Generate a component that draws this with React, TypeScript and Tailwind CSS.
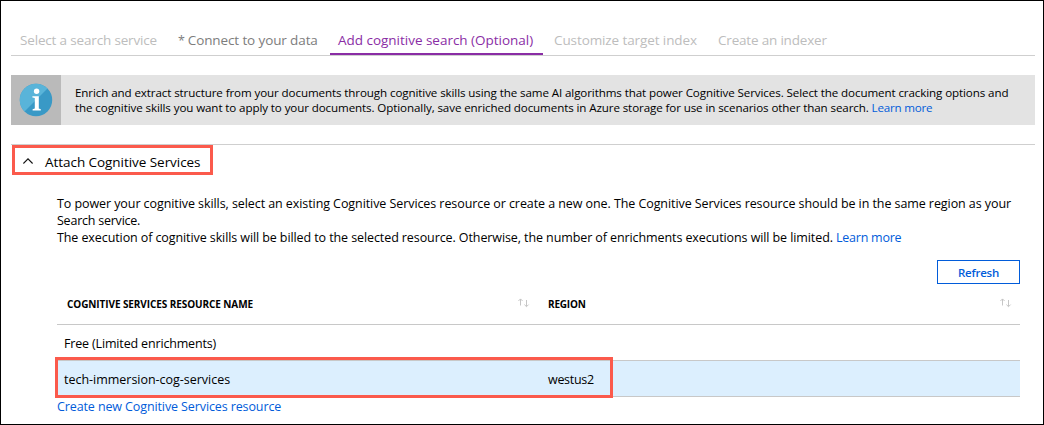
const tabs = [
  { label: "Select a search service", cls: "w-[158px] pl-[9px] text-[#bdbdbd] tracking-[-0.165px]" },
  { label: "* Connect to your data", cls: "w-[160px] pl-[9px] text-[#7d7d7d] tracking-[-0.115px]" },
  { label: "Add cognitive search (Optional)", cls: "w-[214px] pl-[9px] text-[#8a2da5] tracking-[-0.02px]", active: true },
  { label: "Customize target index", cls: "w-[164px] pl-[11px] text-[#bdbdbd] tracking-[-0.1px]" },
  { label: "Create an indexer", cls: "pl-[11px] text-[#bdbdbd] tracking-[-0.19px]" },
];

function InfoIcon() {
  return (
    <svg width="34" height="34" viewBox="0 0 34 34">
      <circle cx="17" cy="17" r="16.2" fill="#3999c6" />
      <path d="M5.5 28.5A16.2 16.2 0 0 1 28.5 5.5Z" fill="#59b4d9" />
      <circle cx="17.6" cy="8.3" r="2.7" fill="#fff" />
      <path d="M13.4 13.2h6.4v12.4l2 .6v1.3h-8.2v-1.3l2.2-.6V15l-2.4-.5Z" fill="#fff" />
    </svg>
  );
}

function SortIcon() {
  return (
    <svg width="12" height="10" viewBox="0 0 12 10" fill="none" stroke="#c6c6c6" strokeWidth="1">
      <path d="M2.5 7.5V1M.4 3 2.5 .9 4.6 3M8.5 2v6.5M6.4 6.6l2.1 2.1 2.1-2.1" />
    </svg>
  );
}

function Tabs() {
  return (
    <nav className="flex h-[27px] border-b border-[#cfcfcf] text-[13.5px] leading-[22px]">
      {tabs.map((t) => (
        <div key={t.label} className={`relative flex-none whitespace-nowrap ${t.cls}`}>
          {t.label.startsWith("*") ? (
            <>
              <span className="mr-[3px] text-[12.5px]">*</span>
              {t.label.slice(2)}
            </>
          ) : (
            t.label
          )}
          {t.active && <span className="absolute bottom-0 left-[1px] h-[2px] w-[213px] bg-[#8a2da5]" />}
        </div>
      ))}
    </nav>
  );
}

export default function App() {
  return (
    <div className="h-[425px] w-[1044px] overflow-hidden border border-black bg-white pl-[10px] pr-[8px] pt-[27px] font-['Open_Sans',sans-serif] text-[12.5px] text-black">
      <div className="pt-px">
        <Tabs />
      </div>

      <div className="mt-[19px] flex h-[50px] bg-[#e3e3e3]">
        <div className="flex w-[50px] flex-none items-center justify-center bg-[#bababa]">
          <InfoIcon />
        </div>
        <div className="whitespace-nowrap pl-[14px] pt-[10px] text-[11.6px] leading-[15px]">
          <p className="tracking-[-0.105px]">
            Enrich and extract structure from your documents through cognitive skills using the same AI algorithms that
            power Cognitive Services. Select the document cracking options and
          </p>
          <p className="tracking-[-0.107px]">
            the cognitive skills you want to apply to your documents. Optionally, save enriched documents in Azure
            storage for use in scenarios other than search.{" "}
            <a className="tracking-[-0.2px] text-[#015cda]">Learn more</a>
          </p>
        </div>
      </div>

      <section className="mt-[19px] border-t border-[#cfcfcf] pl-px">
        <h2 className="flex h-[30px] w-[201px] items-center border-[3px] border-[#fb5a4c] pl-[8px] text-[13.5px] tracking-[-0.05px]">
          <svg className="mt-[2px]" width="10" height="6" viewBox="0 0 10 6" fill="none" stroke="#111" strokeWidth="1.1">
            <path d="M.4 5.5 5 .9l4.6 4.6" />
          </svg>
          <span className="ml-[12px] mt-[3px] whitespace-nowrap leading-[20px]">Attach Cognitive Services</span>
        </h2>

        <div className="pl-[45px] pr-[15px] pt-[20px]">
          <div className="whitespace-nowrap leading-[17px]">
            <p className="tracking-[-0.077px]">
              To power your cognitive skills, select an existing Cognitive Services resource or create a new one. The
              Cognitive Services resource should be in the same region as your
            </p>
            <p className="tracking-[-0.23px]">Search service.</p>
            <p className="tracking-[-0.094px]">
              The execution of cognitive skills will be billed to the selected resource. Otherwise, the number of
              enrichments executions will be limited. <a className="tracking-[-0.25px] text-[#015cda]">Learn more</a>
            </p>
          </div>

          <div className="mt-[14px] flex justify-end">
            <button className="flex h-[24px] w-[83px] items-center justify-center border border-[#015cda] pt-px text-[11.5px] font-semibold tracking-[-0.2px] text-[#015cda]">
              Refresh
            </button>
          </div>

          <div className="relative">
            <div className="grid h-[41px] grid-cols-[481px_482px] border-b border-[#c8c8c8] text-[10px] font-bold leading-[14px]">
              <div className="flex justify-between pl-[10px] pr-[8px] pt-[13px]">
                <span className="whitespace-nowrap tracking-[-0.09px]">COGNITIVE SERVICES RESOURCE NAME</span>
                <span className="pt-px">
                  <SortIcon />
                </span>
              </div>
              <div className="flex justify-between pl-[10px] pr-[8px] pt-[13px]">
                <span className="tracking-[-0.2px]">REGION</span>
                <span className="pt-px">
                  <SortIcon />
                </span>
              </div>
            </div>
            <div className="flex h-[36px] items-center border-b border-[#c8c8c8] pl-[7px] pt-[3px] tracking-[-0.16px]">
              Free (Limited enrichments)
            </div>
            <div className="grid h-[36px] grid-cols-[484px_auto] items-center border-b border-[#c8c8c8] bg-[#dceffe] pl-[7px] pt-[3px]">
              <span className="tracking-[-0.02px]">tech-immersion-cog-services</span>
              <span className="tracking-[-0.3px]">westus2</span>
            </div>
            <div className="pointer-events-none absolute left-[-2px] top-[73px] h-[41px] w-[558px] border-[3px] border-[#fb5a4c]" />
          </div>
          <a className="block pt-px leading-[18px] tracking-[-0.11px] text-[#015cda]">
            Create new Cognitive Services resource
          </a>
        </div>
      </section>
    </div>
  );
}
